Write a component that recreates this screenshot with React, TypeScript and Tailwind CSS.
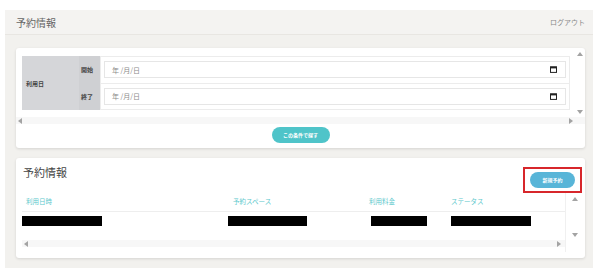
const font = { fontFamily: '"Noto Sans CJK JP", "Noto Sans", sans-serif' };

function Arrow({ dir }: { dir: "up" | "down" | "left" | "right" }) {
  const pts = {
    up: "0,5 3,1 6,5",
    down: "0,1 3,5 6,1",
    left: "5,0 1,3 5,6",
    right: "1,0 5,3 1,6",
  }[dir];
  return (
    <svg width="6" height="6" viewBox="0 0 6 6" className="block">
      <polygon points={pts} fill="#a3a3a3" />
    </svg>
  );
}

function CalendarIcon() {
  return (
    <svg width="7" height="7" viewBox="0 0 7 7" className="block">
      <rect x="0.5" y="0.8" width="6" height="5.6" fill="none" stroke="#222" strokeWidth="1" />
      <rect x="0.5" y="0.8" width="6" height="1.6" fill="#222" />
    </svg>
  );
}

function DateInput() {
  return (
    <div className="flex h-[17px] items-center justify-between border border-[#e6e6e6] bg-white pl-[7px] pr-[8px]">
      <span className="text-[7px] text-[#8a8a8a]">年 /月/日</span>
      <CalendarIcon />
    </div>
  );
}

function VScroll({ downGap }: { downGap: string }) {
  return (
    <div className={`flex w-[10px] flex-col items-center pt-[3px] ${downGap}`}>
      <Arrow dir="up" />
      <div className="flex-1" />
      <Arrow dir="down" />
    </div>
  );
}

export default function App() {
  return (
    <div className="h-[274px] w-[600px] bg-white pl-[5px] pt-[10px]" style={font}>
      <div className="flex h-[258px] w-[588px] flex-col bg-[#f2f1ee]">
        {/* Header */}
        <div className="flex h-[25px] items-center justify-between border-b border-[#e8e6e2] bg-[#f4f3f1] pl-[11px] pr-[8px]">
          <span className="text-[10px] text-[#666]">予約情報</span>
          <span className="text-[7px] text-[#888]">ログアウト</span>
        </div>

        <div className="flex flex-col gap-[10px] pl-[11px] pr-[8px] pt-[13px]">
          {/* Search card */}
          <div className="flex h-[100px] flex-col rounded-[3px] bg-white shadow-[0_1px_3px_rgba(0,0,0,0.12)]">
            <div className="flex h-[69px]">
              <div className="flex-1 pl-[6px] pt-[8px]">
                <div className="flex h-[54px] w-[548px]">
                  <div className="flex w-[57px] items-center bg-[#d5d6d9] pl-[4px] text-[6px] font-bold text-[#444]">
                    利用日
                  </div>
                  <div className="flex w-[21px] flex-col bg-[#cfd0d3] text-[6px] font-bold text-[#444]">
                    <div className="flex h-[27px] items-center pl-[2px]">開始</div>
                    <div className="flex h-[27px] items-center pl-[2px]">終了</div>
                  </div>
                  <div className="flex flex-1 flex-col border border-[#ececec]">
                    <div className="flex h-[27px] flex-col justify-center border-b border-[#ececec] pl-[3px] pr-[3px]">
                      <DateInput />
                    </div>
                    <div className="flex h-[26px] flex-col justify-center pl-[3px] pr-[3px]">
                      <DateInput />
                    </div>
                  </div>
                </div>
              </div>
              <VScroll downGap="pb-[2px]" />
            </div>
            <div className="flex h-[7px] items-center justify-between bg-[#f7f7f7] pl-[1px] pr-[11px]">
              <Arrow dir="left" />
              <Arrow dir="right" />
            </div>
            <div className="flex flex-1 items-start justify-center pt-[3px]">
              <button className="flex h-[16px] w-[58px] items-center justify-center rounded-full bg-[#4fc4c9] text-[5px] font-bold text-white">
                この条件で探す
              </button>
            </div>
          </div>

          {/* Reservation list card */}
          <div className="flex h-[100px] flex-col rounded-[3px] bg-white shadow-[0_1px_3px_rgba(0,0,0,0.12)]">
            <div className="flex h-[35px] items-start justify-between pl-[7px] pr-[3px]">
              <span className="pt-[6px] text-[11px] text-[#444]">予約情報</span>
              <div className="mt-[9px] flex h-[26px] w-[59px] items-center justify-center border-2 border-[#d7262b]">
                <button className="flex h-[16px] w-[45px] items-center justify-center rounded-full bg-[#58b5d8] text-[5px] font-bold text-white">
                  新規予約
                </button>
              </div>
            </div>
            <div className="flex h-[59px]">
              <div className="flex flex-1 flex-col border-r border-[#f0f0f0] pl-[6px]">
                <div className="flex h-[19px] items-center border-b border-[#eeeeee] text-[6.5px] text-[#5cc8cc]">
                  <span className="w-[207px] pl-[4px]">利用日時</span>
                  <span className="w-[139px] pl-[4px]">予約スペース</span>
                  <span className="w-[81px] pl-[1px]">利用料金</span>
                  <span className="pl-[2px]">ステータス</span>
                </div>
                <div className="flex h-[18px] items-center">
                  <div className="w-[206px]">
                    <div className="h-[10px] w-[80px] bg-black" />
                  </div>
                  <div className="w-[143px]">
                    <div className="h-[10px] w-[79px] bg-black" />
                  </div>
                  <div className="w-[80px]">
                    <div className="h-[10px] w-[56px] bg-black" />
                  </div>
                  <div className="h-[10px] w-[80px] bg-black" />
                </div>
                <div className="flex-1" />
                <div className="mb-[5px] flex h-[7px] items-center justify-between bg-[#f7f7f7] pl-[1px] pr-[3px]">
                  <Arrow dir="left" />
                  <Arrow dir="right" />
                </div>
              </div>
              <div className="w-[4px]" />
              <VScroll downGap="pb-[14px]" />
              <div className="w-[5px]" />
            </div>
          </div>
        </div>
      </div>
    </div>
  );
}
